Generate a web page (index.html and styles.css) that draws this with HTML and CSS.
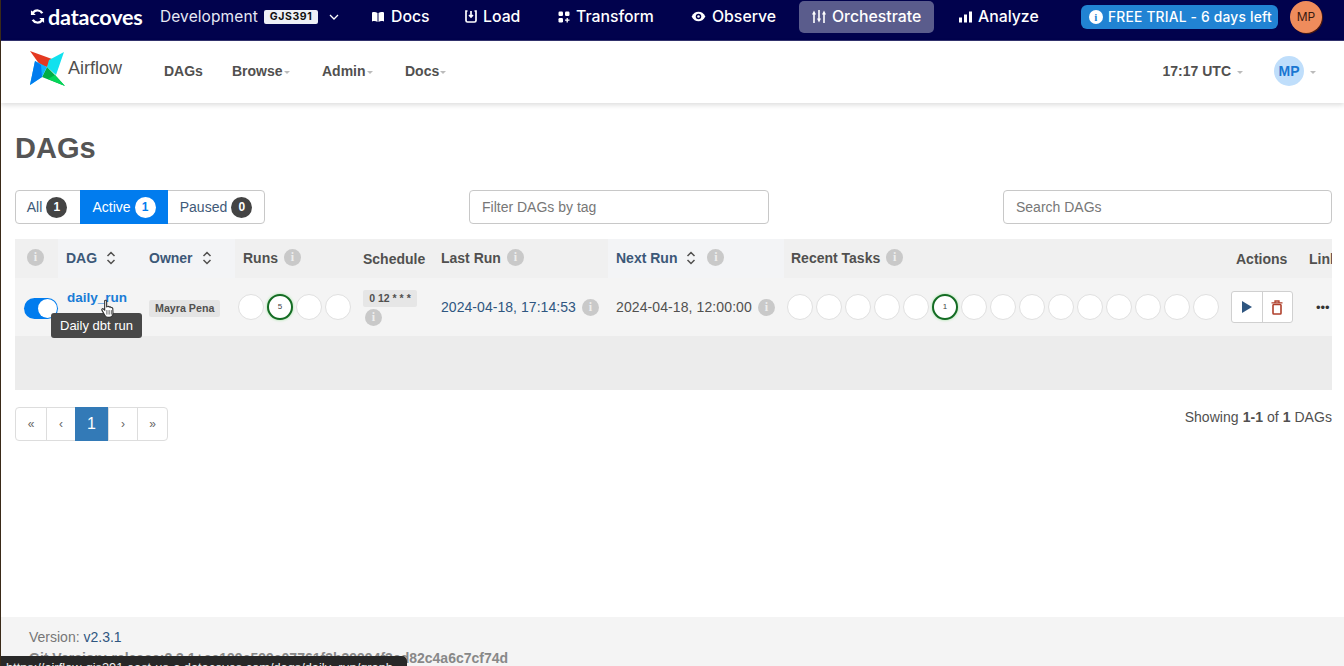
FILE: index.html
```html
<!DOCTYPE html>
<html lang="en">
<head>
<meta charset="utf-8">
<title>DAGs - Airflow</title>
<link rel="stylesheet" href="styles.css">
</head>
<body>
<div class="page">
  <header class="topbar">
    <div class="brand">
      <svg class="brand-mark" viewBox="0 0 16 16" width="17" height="17"><path d="M13.500 4.500A6.400 6.400 0 0 0 3.200 3.400L1.800 2v4.600h4.600L4.700 4.900a4.200 4.200 0 0 1 6.800.5zM2.500 11.500a6.400 6.400 0 0 0 10.300 1.100l1.400 1.400V9.400H9.600l1.700 1.700a4.200 4.200 0 0 1-6.800-.5z" fill="#fff"/></svg>
      <span class="brand-name">datacoves</span>
    </div>
    <span class="env">Development</span>
    <span class="env-code">GJS391</span>
    <svg class="env-caret" viewBox="0 0 10 6" width="10" height="6"><path d="M1 1l4 4 4-4" fill="none" stroke="#fff" stroke-width="1.300"/></svg>
    <nav class="tabs">
      <a class="tab tab-docs"><svg viewBox="0 0 14 12" width="14" height="12"><path d="M1 1.500c2-.7 4-.5 5.500.5v9c-1.500-1-3.500-1.200-5.500-.5zM13 1.500c-2-.7-4-.5-5.500.5v9c1.500-1 3.500-1.200 5.500-.5z" fill="#fff"/></svg>Docs</a>
      <a class="tab tab-load"><svg viewBox="0 0 12 13" width="12" height="13"><path d="M2.500 1H1v9.500A1.500 1.500 0 0 0 2.500 12h7a1.500 1.500 0 0 0 1.500-1.500V1H9.500M6 1v5.500M4 5l2 2 2-2" fill="none" stroke="#fff" stroke-width="1.700"/></svg>Load</a>
      <a class="tab tab-transform"><svg viewBox="0 0 12 12" width="12" height="12"><rect x="0.500" y="0.500" width="4.500" height="4.500" rx="1.200" fill="#fff"/><rect x="7" y="0.500" width="4.500" height="4.500" rx="1.200" fill="#fff"/><rect x="0.500" y="7" width="4.500" height="4.500" rx="1.200" fill="#fff"/><path d="M9.200 7v4.500M7 9.200h4.500" stroke="#fff" stroke-width="1.300"/></svg>Transform</a>
      <a class="tab tab-observe"><svg viewBox="0 0 16 12" width="15" height="11"><path d="M0.500 6C2.500 2.300 5 .8 8 .8s5.500 1.500 7.500 5.200c-2 3.700-4.500 5.200-7.500 5.200S2.500 9.700.5 6z" fill="#fff"/><circle cx="8" cy="6" r="3" fill="#01024d"/><circle cx="8" cy="6" r="1.400" fill="#fff"/></svg>Observe</a>
      <a class="tab tab-active"><svg viewBox="0 0 14 13" width="14" height="13"><path d="M2 4v9M7 0v9M12 4v9" stroke="#fff" stroke-width="1.600" fill="none"/><path d="M0 4.500L2 0.500l2 4zM5 8.500l2 4 2-4zM10 4.500l2-4 2 4z" fill="#fff"/></svg>Orchestrate</a>
      <a class="tab tab-analyze"><svg viewBox="0 0 13 12" width="13" height="12"><rect x="0" y="6.500" width="3" height="5" fill="#fff"/><rect x="5" y="3.500" width="3" height="8" fill="#fff"/><rect x="10" y="0.500" width="3" height="11" fill="#fff"/></svg>Analyze</a>
    </nav>
    <div class="trial"><span class="trial-i">i</span>FREE TRIAL - 6 days left</div>
    <div class="top-avatar">MP</div>
  </header>

  <div class="subnav">
    <a class="logo">
      <svg viewBox="0 0 36 36" width="36" height="36">
        <path d="M1 1l22 8-5 8-7-2z" fill="#e43921"/>
        <path d="M23 9l-5 8 5-1z" fill="#f0876f"/>
        <path d="M35 2l-8 23-9-8 2-7z" fill="#11e1ee"/>
        <path d="M36 36l-23-9 5-10 8 8z" fill="#00ad46"/>
        <path d="M1 35l5-24 12 6-5 10z" fill="#0cb6ff"/>
        <path d="M1 35l5-24 6 4 1 12z" fill="#017cee"/>
        <path d="M36 36l-17-7 7-4z" fill="#04d659"/>
      </svg>
      <span class="logo-text">Airflow</span>
    </a>
    <a class="sublink sublink-dags">DAGs</a>
    <a class="sublink sublink-browse">Browse<i class="caret"></i></a>
    <a class="sublink sublink-admin">Admin<i class="caret"></i></a>
    <a class="sublink sublink-docs">Docs<i class="caret"></i></a>
    <span class="clock">17:17 UTC<i class="caret caret-wide"></i></span>
    <span class="user-avatar">MP</span><i class="caret caret-user"></i>
  </div>

  <main class="content">
    <h1 class="title">DAGs</h1>
    <div class="filters">
      <div class="status-group">
        <a class="status">All <b class="count">1</b></a>
        <a class="status status-on">Active <b class="count count-on">1</b></a>
        <a class="status">Paused <b class="count">0</b></a>
      </div>
      <div class="field field-tag">Filter DAGs by tag</div>
      <div class="field field-search">Search DAGs</div>
    </div>

    <section class="table">
      <div class="th th-info"><span class="info"></span></div>
      <div class="th th-sort"><span class="th-link">DAG</span><svg class="sort" viewBox="0 0 10 14" width="10" height="14"><path d="M1.500 5L5 1.500 8.500 5M1.500 9L5 12.500 8.500 9" fill="none" stroke="#51504f" stroke-width="1.500"/></svg></div>
      <div class="th th-sort th-owner"><span class="th-link">Owner</span><svg class="sort" viewBox="0 0 10 14" width="10" height="14"><path d="M1.500 5L5 1.500 8.500 5M1.500 9L5 12.500 8.500 9" fill="none" stroke="#51504f" stroke-width="1.500"/></svg></div>
      <div class="th">Runs <span class="info"></span></div>
      <div class="th th-low">Schedule</div>
      <div class="th">Last Run <span class="info"></span></div>
      <div class="th th-sort"><span class="th-link">Next Run</span><svg class="sort" viewBox="0 0 10 14" width="10" height="14"><path d="M1.500 5L5 1.500 8.500 5M1.500 9L5 12.500 8.500 9" fill="none" stroke="#51504f" stroke-width="1.500"/></svg><span class="info info-next"></span></div>
      <div class="th th-tasks">Recent Tasks <span class="info"></span></div>
      <div class="th th-low th-actions">Actions</div>
      <div class="th th-low th-links">Links</div>

      <div class="td td-toggle"><span class="toggle"><span class="knob"></span></span></div>
      <div class="td td-dag"><a class="dag-link">daily_run</a></div>
      <div class="td td-owner"><span class="badge">Mayra Pena</span></div>
      <div class="td td-runs">
        <span class="dot"></span><span class="dot dot-on">5</span><span class="dot"></span><span class="dot"></span>
      </div>
      <div class="td td-schedule"><span class="cron">0 12 * * *</span><span class="info info-cron"></span></div>
      <div class="td"><a class="date-link">2024-04-18, 17:14:53</a><span class="info info-date"></span></div>
      <div class="td"><span class="date">2024-04-18, 12:00:00</span><span class="info info-date"></span></div>
      <div class="td td-tasks">
        <span class="dot"></span><span class="dot"></span><span class="dot"></span><span class="dot"></span><span class="dot"></span><span class="dot dot-on">1</span><span class="dot"></span><span class="dot"></span><span class="dot"></span><span class="dot"></span><span class="dot"></span><span class="dot"></span><span class="dot"></span><span class="dot"></span><span class="dot"></span>
      </div>
      <div class="td td-actions">
        <div class="action-group">
          <span class="action"><svg viewBox="0 0 10 12" width="10" height="12"><path d="M0 0l10 6-10 6z" fill="#2f5680"/></svg></span>
          <span class="action action-del"><svg viewBox="0 0 12 15" width="12" height="15"><path d="M0.500 2.800h11M4 2.500V1h4v1.500" fill="none" stroke="#b0402c" stroke-width="1.300"/><rect x="2" y="4.500" width="8" height="9.500" rx="0.800" fill="none" stroke="#b0402c" stroke-width="1.600"/></svg></span>
        </div>
      </div>
      <div class="td td-more"><span class="more">•••</span></div>
      <div class="band"></div>

      <div class="tooltip">Daily dbt run</div>
      <svg class="cursor" viewBox="0 0 14 18" width="16" height="20"><path d="M4 1.500c.8-.8 1.800-.3 1.800.8V7l1-.3c.6-.2 1.200 0 1.400.5.7-.3 1.300-.1 1.600.5.700-.2 1.400.2 1.500.9l.2 4c0 2-1.300 3.900-3.500 3.900H7c-1.300 0-2.200-.7-2.900-1.900L1.500 10c-.5-.9.6-1.800 1.400-1L4 10z" fill="#fff" stroke="#333" stroke-width="1"/><path d="M6 10v4M8 10v4M10 10v4" stroke="#333" stroke-width=".7"/></svg>
    </section>

    <div class="below">
      <div class="pager">
        <a class="page-btn page-end">«</a><a class="page-btn">‹</a><a class="page-btn page-on">1</a><a class="page-btn">›</a><a class="page-btn page-end">»</a>
      </div>
      <p class="showing">Showing <b>1-1</b> of <b>1</b> DAGs</p>
    </div>
  </main>

  <footer class="footer">
    <p class="foot-line">Version: <a class="foot-link">v2.3.1</a></p>
    <p class="foot-line foot-git">Git Version: release:2.3.1+ce199c599c07761f3b39994f3ed82c4a6c7cf74d</p>
  </footer>
  <div class="statusbar">https://airflow-gjs391.east-us-a.datacoves.com/dags/daily_run/graph</div>
</div>
</body>
</html>
```
FILE: styles.css
```css
* { box-sizing: border-box; }
html, body { margin: 0; padding: 0; height: 100%; overflow: hidden; }
body { font-family: "Liberation Sans", Arial, sans-serif; font-size: 14px; color: #51504f; background: #fff; }
a { text-decoration: none; }
p, h1 { margin: 0; }

.page { position: relative; height: 666px; display: flex; flex-direction: column; overflow: hidden; border-left: 1px solid #3a2a18; }

.topbar { height: 41px; flex: none; background: #01024d; border-bottom: 1px solid #33346f; display: flex; align-items: center; color: #fff; font-family: Inter, "Liberation Sans", sans-serif; padding: 0 0 7px 28px; }
.brand { display: flex; align-items: center; width: 131px; gap: 2px; }
.brand-mark { flex: none; }
.brand-name { font-family: Lato, "Liberation Sans", sans-serif; font-weight: 700; font-size: 21.6px; letter-spacing: -0.2px; }
.env { font-size: 15.5px; color: #e6e8f4; width: 104px; letter-spacing: 0.1px; }
.env-code { background: #eef0f6; color: #111; font-size: 10.5px; font-weight: 700; letter-spacing: 0.6px; border-radius: 2px; padding: 1px 3px; width: 54px; height: 14px; line-height: 12px; text-align: center; }
.env-caret { margin-left: 11px; flex: none; }
.tabs { display: flex; align-items: center; margin-left: 32px; }
.tab { display: flex; align-items: center; gap: 6px; color: #fff; font-size: 15.8px; font-weight: 500; height: 32px; }
.tab-docs { width: 94px; }
.tab-load { width: 93px; }
.tab-transform { width: 133px; }
.tab-observe { width: 108px; }
.tab-active { background: #5a5c8c; border-radius: 5px; width: 135px; padding-left: 13px; }
.tab-analyze { margin-left: 25px; width: 122px; }
.trial { display: flex; align-items: center; gap: 5px; background: #2183d3; border-radius: 6px; height: 24px; width: 197px; padding-left: 8px; font-size: 13.8px; font-weight: 500; letter-spacing: 0.2px; }
.trial-i { width: 14px; height: 14px; border-radius: 50%; background: #fff; color: #2183d3; font: 700 11px/14px "Liberation Serif", serif; text-align: center; }
.top-avatar { width: 32px; height: 32px; border-radius: 50%; background: #ef8c5c; color: #3a1a10; font-size: 12px; line-height: 32px; text-align: center; margin-left: 12px; box-shadow: 1px 1px 0 #4a1a10; }

.subnav { height: 62px; flex: none; display: flex; align-items: center; background: #fff; box-shadow: 0 2px 5px rgba(0,0,0,0.14); position: relative; padding: 0 0 2px 28px; }
.logo { display: flex; align-items: center; width: 135px; margin-top: -7px; }
.logo svg { flex: none; }
.logo-text { font-size: 18px; color: #51504f; margin-left: 3px; padding-top: 1px; }
.sublink { font-weight: 700; font-size: 14px; color: #51504f; display: flex; align-items: center; }
.sublink-dags { width: 68px; }
.sublink-browse { width: 90px; }
.sublink-admin { width: 83px; }
.sublink-docs { width: 120px; }
.caret { display: inline-block; border-left: 3px solid transparent; border-right: 3px solid transparent; border-top: 3px solid #bbb; margin-left: 1px; margin-top: 2px; }
.clock { margin-left: auto; font-weight: 700; font-size: 14px; color: #51504f; display: flex; align-items: center; }
.caret-wide { margin-left: 6px; border-left-width: 3.5px; border-right-width: 3.5px; }
.user-avatar { width: 30px; height: 30px; border-radius: 50%; background: #bfdefb; color: #1976d2; font-weight: 700; font-size: 14px; line-height: 30px; text-align: center; margin-left: 31px; }
.caret-user { margin-left: 6px; margin-right: 28px; }

.content { flex: 1; padding: 0 12px 0 14px; min-height: 0; }
.title { font-size: 29px; font-weight: 700; line-height: 33px; margin-top: 29px; color: #555; }
.filters { display: flex; align-items: center; margin-top: 25px; height: 34px; position: relative; }
.status-group { display: flex; border: 1px solid #c8c8c8; border-radius: 4px; height: 34px; width: 250px; }
.status { display: flex; align-items: center; justify-content: center; gap: 4px; color: #3f5a78; font-size: 14px; flex: none; }
.status:first-child { width: 64px; padding-right: 2px; }
.status-on { background: #017cee; color: #fff; width: 88px; margin: -1px 0; }
.status:last-child { flex: 1; }
.count { display: inline-block; min-width: 21px; height: 21px; border-radius: 11px; background: #444; color: #fff; font-size: 12px; line-height: 21px; text-align: center; }
.count-on { background: #fff; color: #017cee; }
.field { height: 34px; border: 1px solid #c8c8c8; border-radius: 4px; font-size: 14px; color: #777; line-height: 32px; padding-left: 12px; }
.field-tag { width: 300px; margin-left: 204px; }
.field-search { width: 329px; margin-left: auto; }

.table { position: relative; display: grid; grid-template-columns: 43px 91px 86px 120px 78px 175px 176px 439px 78px 31px; grid-template-rows: 39px 58px 54px; margin-top: 15px; width: 1317px; background: #f4f4f4; border-radius: 0 4px 0 0; }
.th { background: #f0f0f0; display: flex; align-items: center; gap: 6px; padding: 0 8px 2px; font-weight: 700; font-size: 14px; color: #51504f; white-space: nowrap; overflow: hidden; }
.th-info { padding-left: 12px; }
.th-sort { background: #f3f4f6; }
.th-owner { padding-left: 0; }
.th-tasks { padding-left: 7px; }
.th-link { color: #3c5878; }
.sort { margin-left: 3px; flex: none; }
.th-low { padding: 1px 8px 0; }
.th-actions { padding-left: 13px; }
.th-links { padding-left: 8px; padding-right: 0; }
.info { display: inline-block; width: 17px; height: 17px; border-radius: 50%; background: #c9c9c9; position: relative; flex: none; }
.info::before { content: "i"; position: absolute; inset: 0; color: #eee; font: 700 12px/17px "Liberation Serif", serif; text-align: center; }
.info-next { margin-left: 5px; }
.td { display: flex; align-items: center; padding: 0 8px; font-size: 14px; background: #f4f4f4; }
.td-toggle { padding: 0 0 0 9px; }
.toggle { width: 35px; height: 21px; border-radius: 11px; background: #017cee; position: relative; display: block; margin-top: 2px; }
.knob { position: absolute; right: 1px; top: 1px; width: 19px; height: 19px; border-radius: 50%; background: #fff; }
.td-dag { align-items: flex-start; padding: 11px 0 0 9px; }
.dag-link { color: #1a7cd6; font-weight: 700; font-size: 13.5px; line-height: 17px; }
.td-owner { padding: 2px 0 0 0; }
.badge { background: #e4e4e4; border-radius: 2px; font-size: 10.7px; font-weight: 700; padding: 0 6px; line-height: 17px; height: 17px; color: #51504f; white-space: nowrap; }
.td-runs, .td-tasks { gap: 3px; padding: 0 0 0 3px; }
.dot { width: 26px; height: 26px; flex: none; border-radius: 50%; background: #fff; border: 1px solid #e0e0e0; font-size: 8px; line-height: 24px; text-align: center; color: #444; }
.dot-on { border: 2px solid #146c24; box-shadow: 0 0 3px #9be29b; line-height: 22px; }
.td-schedule { flex-direction: column; align-items: flex-start; justify-content: flex-start; padding: 12px 0 0 8px; }
.cron { background: #e6e6e6; border-radius: 2px; font-size: 10.5px; font-weight: 700; line-height: 17px; height: 17px; width: 54px; text-align: center; white-space: nowrap; }
.info-cron { margin: 2px 0 0 2px; }
.date-link { color: #2f5680; letter-spacing: 0.05px; }
.date { color: #51504f; white-space: nowrap; letter-spacing: 0.1px; }
.info-date { margin-left: 6px; }
.td-actions { padding: 0 0 0 8px; }
.action-group { display: flex; border: 1px solid #d0d0d0; border-radius: 3px; background: #fff; height: 32px; width: 62px; }
.action { flex: 1; display: flex; align-items: center; justify-content: center; }
.action-del { border-left: 1px solid #d0d0d0; }
.td-more { padding: 0 0 0 15px; }
.more { font-size: 13px; color: #333; }
.band { grid-column: 1 / -1; background: #ececec; }

.tooltip { position: absolute; left: 36px; top: 74px; width: 91px; height: 25px; background: #484848; color: #fff; font-size: 13px; line-height: 25px; text-align: center; border-radius: 3px; }
.cursor { position: absolute; left: 85px; top: 60px; }

.below { display: flex; justify-content: space-between; align-items: flex-start; margin-top: 17px; }
.pager { display: flex; height: 34px; border: 1px solid #ddd; border-radius: 4px; background: #fff; }
.page-btn { width: 29px; text-align: center; line-height: 32px; font-size: 12px; color: #666; border-left: 1px solid #ddd; }
.page-end { width: 30px; }
.page-end:first-child { border-left: 0; }
.page-on { width: 33px; background: #337ab7; color: #fff; font-size: 16px; margin: -1px 0; line-height: 34px; border-left: 0; }
.showing { font-size: 14px; color: #51504f; margin-top: 2px; letter-spacing: 0.05px; }

.footer { flex: none; height: 49px; background: #f4f4f4; padding: 10px 0 0 28px; color: #777; font-size: 14px; line-height: 21px; overflow: hidden; }
.foot-line { white-space: nowrap; }
.foot-git { font-weight: 700; color: #888; }
.foot-link { color: #2f5680; }
.statusbar { position: absolute; left: -1px; bottom: 0; width: 407px; height: 10px; background: #282828; color: #eee; font-size: 12.8px; line-height: 14px; padding: 5px 0 0 6px; border-radius: 0 5px 0 0; overflow: hidden; white-space: nowrap; }
```
